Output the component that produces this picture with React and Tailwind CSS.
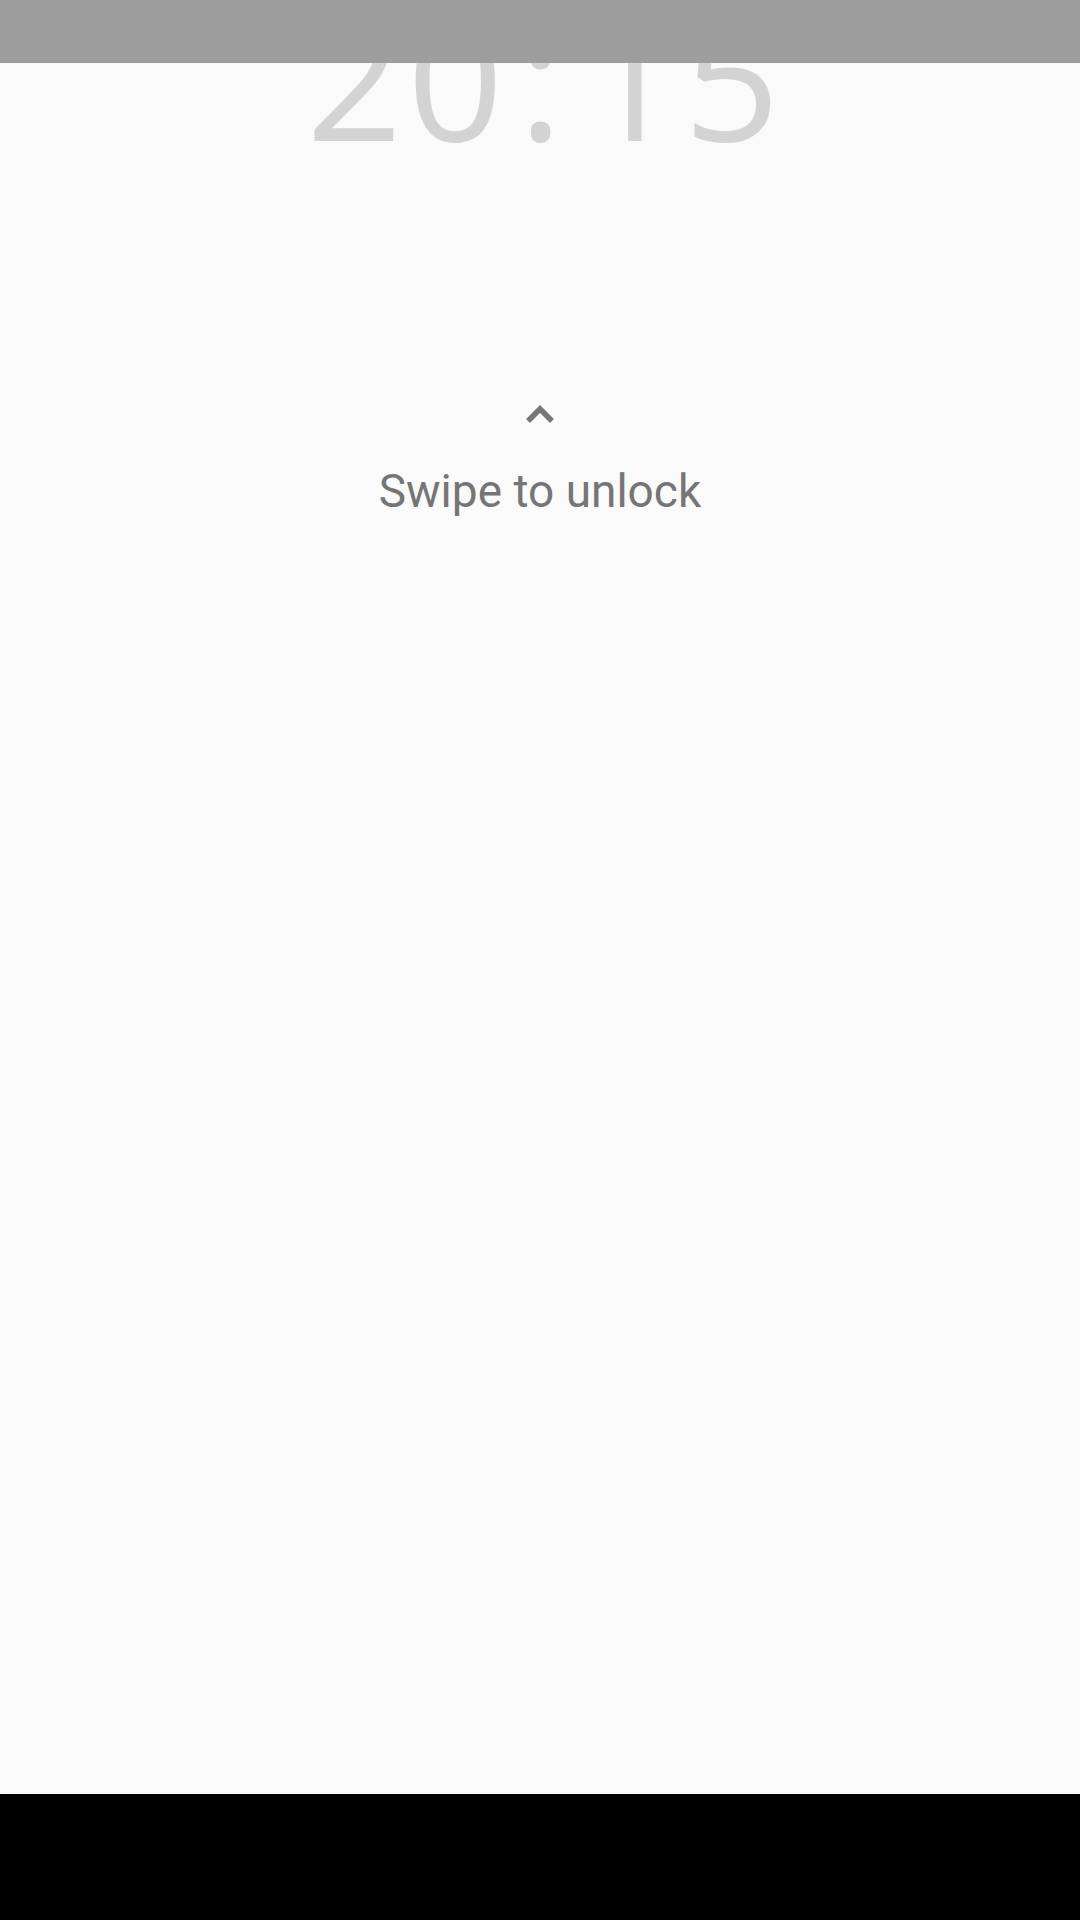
import React from "react";

export default function App() {
  return (
    <div className="relative w-[1080px] h-[1920px] bg-[#fafafa] flex flex-col overflow-hidden">
      <div className="absolute top-0 left-0 right-0 h-[63px] bg-[#9e9e9e] z-10" />
      <div className="flex-1 flex flex-col items-center">
        <div
          className="mt-[-8px] pl-[6px] h-[168px] leading-none text-[168px] text-[#d3d3d3] flex"
          style={{ fontFamily: '"Open Sans", sans-serif' }}
        >
          <span className="mr-[5px]">2</span>
          <span className="mr-[15px]">0</span>
          <span className="mr-[20px]">:</span>
          <span className="mr-[5px]">1</span>
          <span>5</span>
        </div>
        <svg
          className="mt-[242px]"
          width="32"
          height="22"
          viewBox="0 0 32 22"
        >
          <polyline
            points="4,19 16,7 28,19"
            fill="none"
            stroke="#777777"
            strokeWidth="5.5"
            strokeLinecap="butt"
            strokeLinejoin="miter"
          />
        </svg>
        <div
          className="mt-[44px] leading-none text-[46px] text-[#757575]"
          style={{ fontFamily: "Roboto, sans-serif" }}
        >
          Swipe to unlock
        </div>
      </div>
      <div className="h-[126px] bg-black" />
    </div>
  );
}
